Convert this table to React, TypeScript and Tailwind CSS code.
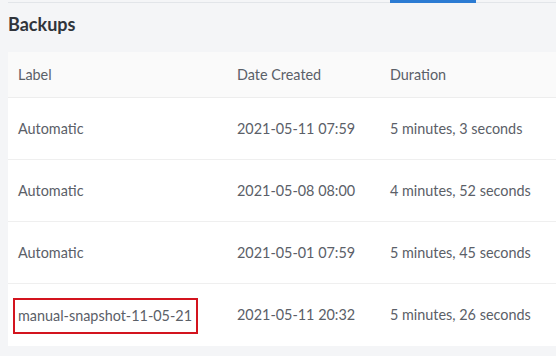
const rows = [
  { label: "Automatic", date: "2021-05-11 07:59", duration: "5 minutes, 3 seconds" },
  { label: "Automatic", date: "2021-05-08 08:00", duration: "4 minutes, 52 seconds" },
  { label: "Automatic", date: "2021-05-01 07:59", duration: "5 minutes, 45 seconds" },
  { label: "manual-snapshot-11-05-21", date: "2021-05-11 20:32", duration: "5 minutes, 26 seconds", marked: true },
];

export default function App() {
  return (
    <div className="h-[356px] w-[556px] overflow-hidden bg-[#f4f5f7] pl-2 font-['Lato','Open_Sans',sans-serif]">
      {/* tab strip */}
      <div className="flex h-[3px] border-b border-[#e2e5e9]">
        <div className="w-[382px]" />
        <div className="h-[3px] w-[86px] bg-[#2b7bd3]" />
      </div>

      <h2 className="pt-[10px] text-[18px] font-bold leading-[22px] text-[#30343b]">Backups</h2>

      <div className="mt-[17px] w-[560px] bg-white text-[14.4px] text-[#5b6068]">
        <div className="flex h-[46px] items-center border-b border-[#ededed] bg-[#fafafa] pl-[10px]">
          <div className="w-[219px]">Label</div>
          <div className="w-[153px]">Date Created</div>
          <div>Duration</div>
        </div>
        {rows.map((r, i) => (
          <div
            key={i}
            className={`flex h-[62px] items-center pl-[10px] ${i < rows.length - 1 ? "border-b border-[#efefef]" : ""}`}
          >
            <div className="w-[219px]">
              {r.marked ? (
                <span className="-ml-[5px] mt-[2px] inline-block border-2 border-[#d3141e] pl-[3px] pr-[4px] leading-[32px]">
                  {r.label}
                </span>
              ) : (
                r.label
              )}
            </div>
            <div className="w-[153px]">{r.date}</div>
            <div>{r.duration}</div>
          </div>
        ))}
      </div>
    </div>
  );
}
